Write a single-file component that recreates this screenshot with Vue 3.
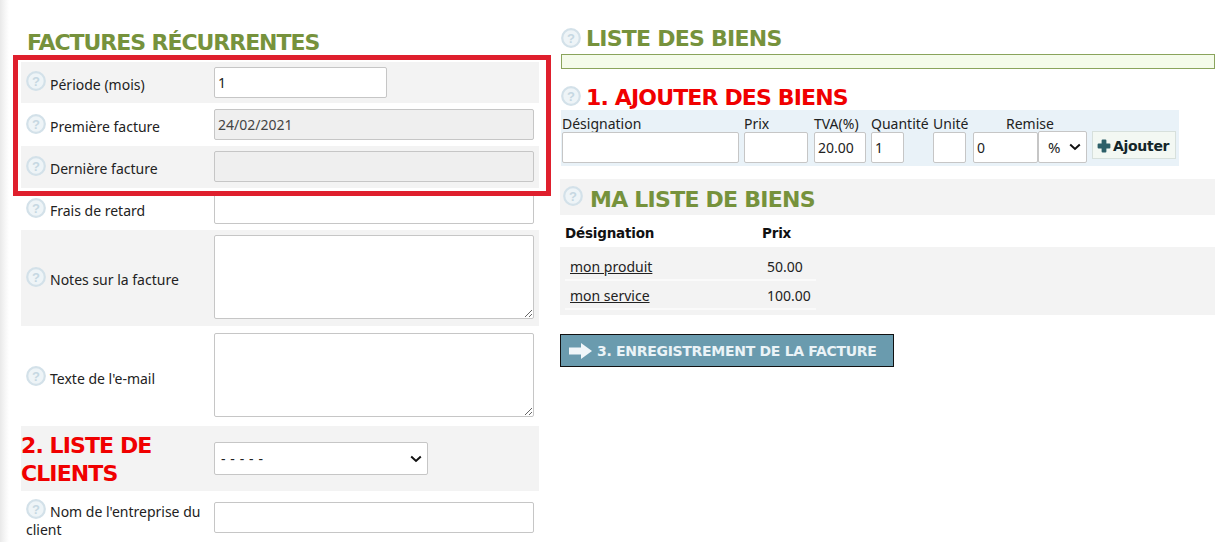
<script setup>
const helpRows = [
  { label: 'Période (mois)', type: 'input', value: '1', cls: 'short', h: 41, pad: 5 },
  { label: 'Première facture', type: 'input', value: '24/02/2021', cls: 'off', h: 43, pad: 6 },
  { label: 'Dernière facture', type: 'input', value: '', cls: 'off', h: 42, pad: 5 },
  { label: 'Frais de retard', type: 'input', value: '', cls: '', h: 42, pad: 5 },
  { label: 'Notes sur la facture', type: 'area', h: 96, pad: 5 },
  { label: "Texte de l'e-mail", type: 'area', h: 100, pad: 7 }
]

const goods = [
  { name: 'mon produit', price: '50.00' },
  { name: 'mon service', price: '100.00' }
]
</script>

<template>
  <div class="page">
    <div class="left">
      <h2 class="title">FACTURES RÉCURRENTES</h2>
      <div class="rows">
        <div class="highlight"></div>
        <div
          v-for="row in helpRows"
          :key="row.label"
          class="row"
          :style="{ height: row.h + 'px', paddingTop: row.pad + 'px' }"
        >
          <div class="label">
            <svg class="help" viewBox="0 0 20 20">
              <circle cx="10" cy="10" r="8.8" fill="#eef4f7" stroke="#d3e1e9" stroke-width="2.2" />
              <text x="10" y="14.6" text-anchor="middle" class="help-mark">?</text>
            </svg>
            <span>{{ row.label }}</span>
          </div>
          <textarea v-if="row.type === 'area'"></textarea>
          <input v-else type="text" :value="row.value" :class="row.cls" :disabled="row.cls === 'off'">
        </div>
        <div class="row clients">
          <h2 class="red">2. LISTE DE CLIENTS</h2>
          <select class="client-select"><option>- - - - -</option></select>
        </div>
        <div class="row last">
          <div class="label wrap">
            <svg class="help" viewBox="0 0 20 20">
              <circle cx="10" cy="10" r="8.8" fill="#eef4f7" stroke="#d3e1e9" stroke-width="2.2" />
              <text x="10" y="14.6" text-anchor="middle" class="help-mark">?</text>
            </svg>
            <span class="wrap-text">Nom de l'entreprise du client</span>
          </div>
          <input type="text">
        </div>
      </div>
    </div>

    <div class="right">
      <div class="head first">
        <svg class="help" viewBox="0 0 20 20">
          <circle cx="10" cy="10" r="8.8" fill="#eef4f7" stroke="#d3e1e9" stroke-width="2.2" />
          <text x="10" y="14.6" text-anchor="middle" class="help-mark">?</text>
        </svg>
        <h2 class="title">LISTE DES BIENS</h2>
      </div>
      <div class="green-bar"></div>

      <div class="head second">
        <svg class="help" viewBox="0 0 20 20">
          <circle cx="10" cy="10" r="8.8" fill="#eef4f7" stroke="#d3e1e9" stroke-width="2.2" />
          <text x="10" y="14.6" text-anchor="middle" class="help-mark">?</text>
        </svg>
        <h2 class="red">1. AJOUTER DES BIENS</h2>
      </div>
      <div class="add-form">
        <label class="f-name">Désignation<input type="text"></label>
        <label class="f-price">Prix<input type="text"></label>
        <label class="f-tva">TVA(%)<input type="text" value="20.00"></label>
        <label class="f-qty">Quantité<input type="text" value="1"></label>
        <label class="f-unit">Unité<input type="text"></label>
        <label class="f-disc"><span>Remise</span><input type="text" value="0"></label>
        <select class="f-type"><option>%</option></select>
        <button class="add-btn">
          <svg viewBox="0 0 14 14" width="14" height="14"><path d="M4.6 1.5Q4.6.5 5.6.5h2.8q1 0 1 1v3h3q1 0 1 1v3q0 1-1 1h-3v3q0 1-1 1H5.6q-1 0-1-1v-3h-3q-1 0-1-1v-3q0-1 1-1h3z" fill="#2d5f68" /></svg>
          Ajouter
        </button>
      </div>

      <div class="list-head">
        <svg class="help" viewBox="0 0 20 20">
          <circle cx="10" cy="10" r="8.8" fill="#eef4f7" stroke="#d3e1e9" stroke-width="2.2" />
          <text x="10" y="14.6" text-anchor="middle" class="help-mark">?</text>
        </svg>
        <h2 class="title">MA LISTE DE BIENS</h2>
      </div>
      <div class="table-head">
        <b class="c-name">Désignation</b>
        <b>Prix</b>
      </div>
      <div class="goods">
        <div v-for="g in goods" :key="g.name" class="good">
          <a class="c-name" href="#">{{ g.name }}</a>
          <span>{{ g.price }}</span>
        </div>
      </div>
      <button class="save-btn">
        <svg viewBox="0 0 24 18" width="24" height="18"><path d="M0 5.5h12V1l11 8-11 8v-4.5H0z" fill="#f0f6f9" /></svg>
        3. ENREGISTREMENT DE LA FACTURE
      </button>
    </div>
  </div>
</template>

<style>
html, body { background: #fff; overflow: hidden; }
</style>

<style scoped>
.page {
  width: 1215px;
  height: 542px;
  overflow: hidden;
  display: flex;
  box-sizing: border-box;
  padding-left: 21px;
  background: linear-gradient(90deg, #e9e9e9 0, #f6f6f6 5px, #fff 9px);
  font-family: Tahoma, "Noto Sans", "Open Sans", sans-serif;
  font-size: 14px;
  color: #222;
}
h2 {
  margin: 0;
  font-family: "DejaVu Sans", sans-serif;
  font-size: 22px;
  font-weight: 700;
  line-height: 28px;
  letter-spacing: -0.75px;
}
.title { color: #76923c; }
.red { color: #f00000; }

.left { width: 518px; margin-right: 21px; flex: none; }
.left > .title { padding: 29px 0 0 6px; height: 33px; box-sizing: content-box; white-space: nowrap; letter-spacing: -1.05px; }

.rows { position: relative; }
.highlight {
  position: absolute;
  left: -8px;
  top: -7px;
  width: 538px;
  height: 141px;
  box-sizing: border-box;
  border: 5px solid #df1f2d;
  z-index: 2;
  pointer-events: none;
}
.row { display: flex; box-sizing: border-box; align-items: flex-start; }
.row:nth-child(even) { background: #f3f3f3; }
.label {
  width: 193px;
  flex: none;
  display: flex;
  align-items: center;
  align-self: center;
  padding-left: 5px;
  box-sizing: border-box;
}
.label span { margin-left: 4px; position: relative; top: 2px; }
.help { width: 20px; height: 20px; flex: none; position: relative; top: -3px; }
.help-mark { font-size: 13px; font-weight: 700; fill: #c6d8e2; font-family: "Liberation Sans", sans-serif; }
.row:not(.last) .label span { top: -1px; }
.row:not(.last) .label .help { top: -4px; }

input, select, textarea {
  font-family: inherit;
  font-size: 14px;
  color: #222;
  box-sizing: border-box;
  border: 1px solid #c6c6c6;
  border-radius: 2px;
  background: #fff;
  padding: 1px 3px;
  outline: none;
}
select {
  appearance: none;
  background: #fff url("data:image/svg+xml,%3Csvg xmlns='http://www.w3.org/2000/svg' width='12' height='8'%3E%3Cpath d='M1.2 1.5 6 6l4.8-4.5' fill='none' stroke='%23111' stroke-width='2'/%3E%3C/svg%3E") no-repeat right 5px center;
}
.row > input { width: 320px; height: 31px; }
.row > input.short { width: 173px; }
.row > input.off { background: #efefef; color: #444; }
textarea { width: 320px; height: 84px; display: block; }

.clients {
  height: 65px;
  padding-top: 1px;
  background: #f3f3f3 !important;
  align-items: center;
}
.clients h2 { width: 193px; flex: none; box-sizing: border-box; padding-right: 30px; position: relative; top: 1px; letter-spacing: -0.9px; }
.client-select { width: 214px; height: 33px; padding-left: 6px; letter-spacing: 0.6px; margin-top: -1px; }
.last { height: 50px; padding-top: 11px; background: #fff !important; }
.last > .label { display: block; align-self: flex-start; padding: 0 0 0 5px; line-height: 18px; margin-top: 0; }
.last .help { float: left; margin: 0 4px -4px 0; top: -3px; }
.last .wrap-text { margin: 0; top: 1px; display: inline; }

.right { flex: 1; min-width: 0; }
.head { display: flex; align-items: center; gap: 5px; padding-left: 1px; }
.head .help, .list-head .help { top: -1px; }
.head.first { margin-top: 24px; height: 30px; }
.green-bar {
  height: 15px;
  margin-left: 1px;
  border: 1px solid #8aa45c;
  background: #f4fbea;
  box-sizing: border-box;
}
.head.second { margin-top: 14px; height: 27px; }
.head.second h2 { position: relative; top: 1px; letter-spacing: -0.85px; }

.add-form {
  display: flex;
  align-items: flex-end;
  width: 618px;
  height: 56px;
  margin-left: 1px;
  padding-bottom: 3px;
  box-sizing: border-box;
  background: #e9f2f8;
  gap: 5px;
  line-height: 17px;
}
.add-form label { display: flex; flex-direction: column; }
.add-form input { height: 31px; width: 100%; }
.f-name { width: 177px; margin-left: 1px; }
.f-price { width: 64px; }
.f-tva { width: 52px; margin-left: 1px; }
.f-qty { width: 57px; }
.f-qty input { width: 33px !important; }
.f-unit { width: 35px; margin-left: 0; margin-right: 0; }
.f-unit input { width: 33px !important; }
.f-disc { width: 65px; }
.f-disc span { margin-left: 33px; white-space: nowrap; }
.f-type { width: 49px; height: 32px; margin-left: -5px; padding-left: 9px; font-size: 15px; }
.add-btn {
  height: 28px;
  width: 84px;
  margin: 0 0 4px 0;
  padding: 1px 0 0 4px;
  display: flex;
  align-items: center;
  gap: 2px;
  border: 1px solid #d7e0dc;
  background: #f3f8f3;
  font-family: "DejaVu Sans", sans-serif;
  font-size: 14px;
  font-weight: 700;
  letter-spacing: -0.3px;
  color: #14262a;
}

.list-head {
  display: flex;
  align-items: center;
  gap: 7px;
  height: 36px;
  margin-top: 13px;
  padding-left: 3px;
  background: #f3f3f3;
}
.list-head h2 { position: relative; top: 3px; }
.table-head {
  display: flex;
  height: 32px;
  align-items: center;
  padding-left: 5px;
  padding-top: 3px;
  box-sizing: border-box;
  color: #111;
  font-family: "DejaVu Sans", sans-serif;
  font-size: 13.5px;
  letter-spacing: -0.2px;
}
.c-name { width: 197px; flex: none; }
.goods { background: #f3f3f3; padding: 5px 0 4px 5px; height: 68px; box-sizing: border-box; }
.good {
  display: flex;
  width: 251px;
  height: 29px;
  align-items: center;
  padding-left: 5px;
  padding-top: 2px;
  box-sizing: border-box;
  border-bottom: 2px solid #fafafa;
}
.good a { color: #222; width: 197px; }
.save-btn {
  display: flex;
  align-items: center;
  gap: 4px;
  width: 334px;
  height: 33px;
  margin-top: 19px;
  padding: 1px 0 0 8px;
  box-sizing: border-box;
  background: #6a9bae;
  border: 1px solid #111;
  color: #eaf3f7;
  font-family: "DejaVu Sans", sans-serif;
  font-size: 14px;
  font-weight: 700;
  letter-spacing: -0.3px;
  white-space: nowrap;
}
</style>
